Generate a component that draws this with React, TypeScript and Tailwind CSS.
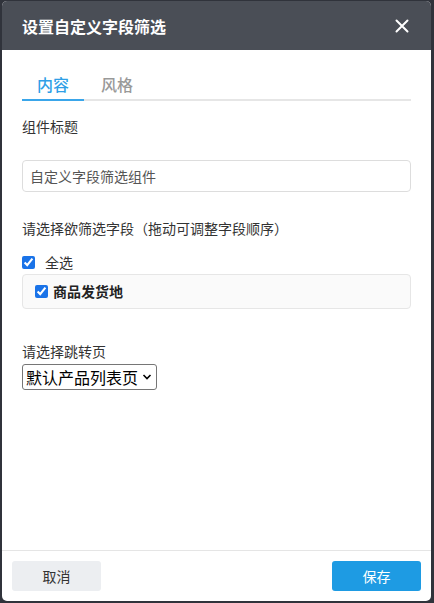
import React from "react";

export default function App() {
  return (
    <div
      className="w-[434px] h-[603px] bg-[#30333b] overflow-hidden pt-[1px] pl-[2px]"
      style={{ fontFamily: '"Noto Sans CJK SC", "Liberation Sans", sans-serif' }}
    >
      <div className="w-[429px] h-[600px] bg-white rounded-[5px] overflow-hidden flex flex-col">
        <div className="h-[49px] bg-[#4a4e56] flex items-center justify-between pl-[20px] pr-[20px] shrink-0">
          <span className="text-white text-[16px] font-bold leading-none">设置自定义字段筛选</span>
          <svg width="14" height="14" viewBox="0 0 14 14" className="mr-[2px]">
            <path d="M1.5 1.5 L12.5 12.5 M12.5 1.5 L1.5 12.5" stroke="#ffffff" strokeWidth="2" strokeLinecap="round" />
          </svg>
        </div>
        <div className="flex-1 px-[20px]">
          <div className="flex border-b-2 border-[#e6e6e6] mt-[22px]">
            <div className="w-[62px] -mb-[2px] border-b-2 border-[#3aa6ea] text-center text-[16px] font-medium text-[#2f9fe6] leading-[24px] pb-[3px]">内容</div>
            <div className="ml-[17px] text-[16px] font-medium text-[#999999] leading-[24px] pb-[3px]">风格</div>
          </div>
          <div className="mt-[14px] text-[14px] text-[#333333] leading-[22px]">组件标题</div>
          <div className="mt-[23px] h-[32px] border border-[#dddddd] rounded-[4px] flex items-center pl-[7px] text-[14px] text-[#555555]">
            自定义字段筛选组件
          </div>
          <div className="mt-[25px] text-[14px] text-[#333333] leading-[22px]">请选择欲筛选字段（拖动可调整字段顺序）</div>
          <div className="mt-[12px] flex items-center h-[22px]">
            <input type="checkbox" defaultChecked className="w-[13px] h-[13px] m-0 accent-[#1a73e8]" />
            <span className="ml-[10px] text-[14px] text-[#333333]">全选</span>
          </div>
          <div className="mt-[1px] h-[35px] border border-[#e6e6e6] bg-[#fafafa] rounded-[4px] flex items-center pl-[12px]">
            <input type="checkbox" defaultChecked className="w-[13px] h-[13px] m-0 accent-[#1a73e8]" />
            <span className="ml-[5px] text-[14px] font-bold text-[#222222]">商品发货地</span>
          </div>
          <div className="mt-[31px] text-[14px] text-[#333333] leading-[22px]">请选择跳转页</div>
          <div className="mt-[2px] inline-flex items-center h-[26px] border border-[#767676] rounded-[3px] pl-[3px] pr-[4px] text-[16px] text-black">
            默认产品列表页
            <svg width="10" height="8" viewBox="0 0 10 8" className="ml-[4px]">
              <path d="M1.5 2 L5 5.5 L8.5 2" stroke="#000" strokeWidth="1.6" fill="none" />
            </svg>
          </div>
        </div>
        <div className="h-[51px] border-t border-[#e5e5e5] flex items-center justify-between px-[10px] shrink-0">
          <button className="w-[89px] h-[30px] bg-[#eceef1] rounded-[3px] text-[14px] text-[#333333]">取消</button>
          <button className="w-[89px] h-[30px] bg-[#1e9be3] rounded-[3px] text-[14px] text-white">保存</button>
        </div>
      </div>
    </div>
  );
}
